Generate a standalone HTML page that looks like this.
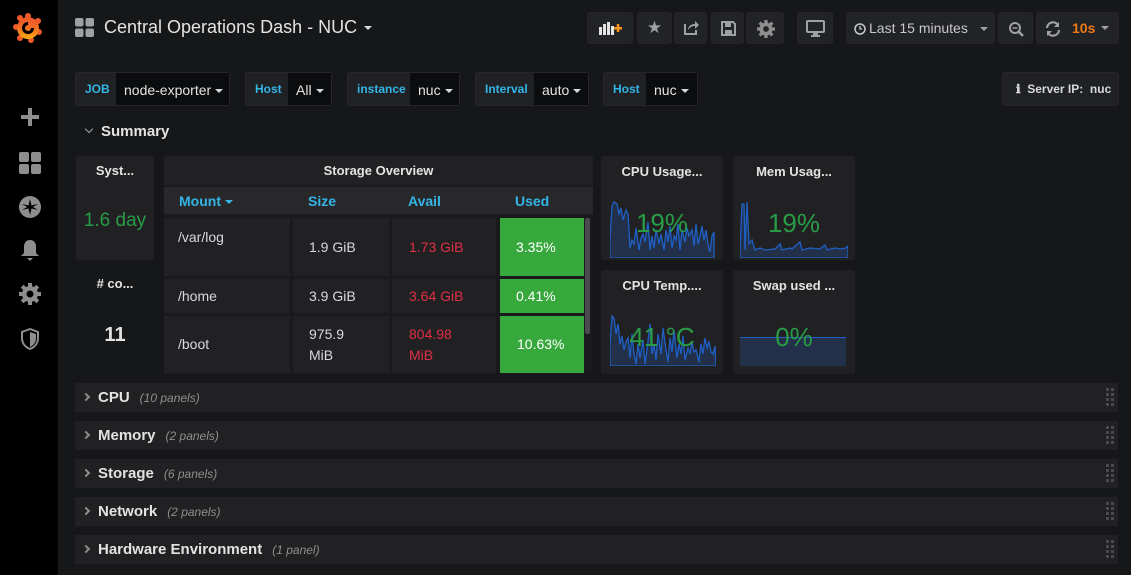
<!DOCTYPE html>
<html><head><meta charset="utf-8"><style>
*{box-sizing:border-box;margin:0;padding:0}
body{width:1131px;height:575px;background:#161719;font-family:"Liberation Sans",Arial,sans-serif;color:#d8d9da;position:relative;overflow:hidden}
.a{position:absolute}
.side{left:0;top:0;width:59px;height:575px;background:#000;border-right:1px solid #1b1b1d}
.btn{position:absolute;top:12px;height:32px;background:#222326;border-radius:3px;border:1px solid #262628}
.var{position:absolute;top:72px;height:34px;background:#202124;border-radius:3px;border:1px solid #27272a}
.lab{position:absolute;top:0;height:32px;line-height:32px;color:#33b5e5;font-size:12px;font-weight:bold;padding-left:9px}
.val{position:absolute;top:0;height:32px;line-height:34px;background:#0b0c0e;font-size:14px;color:#e3e3e3;padding-left:8px}
.caret{display:inline-block;border-left:4px solid transparent;border-right:4px solid transparent;border-top:4px solid #d8d9da;vertical-align:middle;margin-left:4px}
.panel{position:absolute;background:#212124;border-radius:3px}
.ptitle{position:absolute;left:0;right:0;top:8px;text-align:center;font-size:13px;font-weight:bold;color:#e3e3e3}
.big{position:absolute;left:0;right:0;text-align:center;color:#299c46}
.cell{position:absolute;background:#212124;font-size:14px;padding-left:14px}
.red{color:#e02f44}
.grn{background:#37a83c;color:#fff}
.row{position:absolute;left:75px;width:1043px;height:29px;background:#212124;}
.row .t{position:absolute;left:23px;top:6px;font-size:15px;font-weight:bold;color:#e3e3e3}
.row .t i{font-weight:normal;font-size:12px;color:#8e8e8e;margin-left:10px}
.row .chev{position:absolute;left:8px;top:11px;width:6px;height:6px;border-right:2px solid #8e8e8e;border-top:2px solid #8e8e8e;transform:rotate(45deg)}
.drag{position:absolute;right:4px;top:5px;width:8px;height:20px;background:repeating-linear-gradient(90deg,#4a4a4d 0 3px,transparent 3px 5px),transparent;-webkit-mask:repeating-linear-gradient(#000 0 3px,transparent 3px 5px);mask:repeating-linear-gradient(#000 0 3px,transparent 3px 5px)}
.th{position:absolute;top:193px;font-size:14px;font-weight:bold;color:#33b5e5}
</style></head><body>
<div class="a side">
 <svg class="a" style="left:13px;top:13px" width="30" height="30" viewBox="0 0 30 30"><circle cx="15" cy="15" r="11" fill="#f05a28"/><g fill="#f05a28"><circle cx="15" cy="3" r="3"/><circle cx="25" cy="8" r="3"/><circle cx="26" cy="19" r="3"/><circle cx="18" cy="27" r="3"/><circle cx="7" cy="25" r="3"/><circle cx="3" cy="14" r="3"/><circle cx="7" cy="5" r="3"/></g><circle cx="15" cy="15" r="11" fill="url(#g)"/><defs><linearGradient id="g" x1="0" y1="1" x2="0" y2="0"><stop offset="0" stop-color="#fbca0a" stop-opacity=".8"/><stop offset="1" stop-color="#f05a28" stop-opacity="0"/></linearGradient></defs><path d="M15 9a6 6 0 1 0 6 6h-3a3 3 0 1 1-3-3z" fill="#000"/></svg>
 <div class="a" style="left:21px;top:115px;width:18px;height:4px;background:#8e8e8e"></div><div class="a" style="left:28px;top:108px;width:4px;height:18px;background:#8e8e8e"></div>
 <svg class="a" style="left:19px;top:152px" width="22" height="22"><rect x="0" y="0" width="10" height="10" rx="2" fill="#8e8e8e"/><rect x="12" y="0" width="10" height="10" rx="2" fill="#8e8e8e"/><rect x="0" y="12" width="10" height="10" rx="2" fill="#8e8e8e"/><rect x="12" y="12" width="10" height="10" rx="2" fill="#8e8e8e"/></svg>
 <svg class="a" style="left:19px;top:196px" width="22" height="22"><circle cx="11" cy="11" r="11" fill="#8e8e8e"/><path d="M11 3l1.5 6.5 6.5-1.5-5 3 5 3-6.5-1.5-1.5 6.5-1.5-6.5-6.5 1.5 5-3-5-3 6.5 1.5z" fill="#000"/></svg>
 <svg class="a" style="left:20px;top:239px" width="20" height="22"><path d="M10 1c-4 0-6 3-6 7v6l-3 3h18l-3-3V8c0-4-2-7-6-7z" fill="#8e8e8e"/><path d="M7 19h6l-3 3z" fill="#8e8e8e"/></svg>
 <svg class="a" style="left:19px;top:283px" width="22" height="22" viewBox="0 0 22 22"><g fill="#8e8e8e"><circle cx="11" cy="11" r="8"/><rect x="9" y="0" width="4" height="22"/><rect x="0" y="9" width="22" height="4"/><rect x="9" y="0" width="4" height="22" transform="rotate(45 11 11)"/><rect x="9" y="0" width="4" height="22" transform="rotate(-45 11 11)"/></g><circle cx="11" cy="11" r="3.5" fill="#000"/></svg>
 <svg class="a" style="left:20px;top:328px" width="20" height="22"><path d="M10 1L2 4v6c0 5 3 9 8 11 5-2 8-6 8-11V4z" fill="none" stroke="#8e8e8e" stroke-width="2"/><path d="M10 4l6 2v4c0 4-2 7-6 9z" fill="#8e8e8e"/></svg>
</div>

<svg class="a" style="left:75px;top:18px" width="19" height="19"><rect x="0" y="0" width="8.5" height="8.5" rx="2" fill="#9fa0a3"/><rect x="10.5" y="0" width="8.5" height="8.5" rx="2" fill="#9fa0a3"/><rect x="0" y="10.5" width="8.5" height="8.5" rx="2" fill="#9fa0a3"/><rect x="10.5" y="10.5" width="8.5" height="8.5" rx="2" fill="#9fa0a3"/></svg>
<div class="a" style="left:104px;top:17px;font-size:18px;color:#e3e3e3">Central Operations Dash - NUC <span class="caret" style="border-top-color:#d8d9da;margin-left:2px"></span></div>

<div class="btn" style="left:587px;width:46px"><svg class="a" style="left:11px;top:8px" width="24" height="14"><rect x="0" y="6" width="3" height="8" fill="#e3e3e3"/><rect x="4" y="3" width="3" height="11" fill="#e3e3e3"/><rect x="8" y="1" width="3" height="13" fill="#e3e3e3"/><rect x="12" y="5" width="3" height="9" fill="#e3e3e3"/><rect x="15" y="6" width="8" height="2.5" fill="#f7941e"/><rect x="17.8" y="3" width="2.5" height="8" fill="#f7941e"/></svg></div>
<div class="btn" style="left:637px;width:35px;color:#9fa0a3;font-size:17px;text-align:center;line-height:30px">★</div>
<div class="btn" style="left:674px;width:33px"><svg class="a" style="left:8px;top:7px" width="16" height="16"><path d="M2 4v10h11v-4" fill="none" stroke="#9fa0a3" stroke-width="2"/><path d="M5 10c0-4 3-6 7-6V1l4 4-4 4V6c-3 0-5 1-7 4z" fill="#9fa0a3"/></svg></div>
<div class="btn" style="left:711px;width:33px"><svg class="a" style="left:9px;top:8px" width="15" height="15"><path d="M1 1h11l2 2v11H1z" fill="none" stroke="#9fa0a3" stroke-width="2"/><rect x="4" y="2" width="6" height="4" fill="#9fa0a3"/><rect x="4" y="9" width="7" height="4" fill="#9fa0a3"/></svg></div>
<div class="btn" style="left:746px;width:38px"><svg class="a" style="left:10px;top:7px" width="18" height="18" viewBox="0 0 22 22"><g fill="#8e8e8e"><circle cx="11" cy="11" r="8"/><rect x="9" y="0" width="4" height="22"/><rect x="0" y="9" width="22" height="4"/><rect x="9" y="0" width="4" height="22" transform="rotate(45 11 11)"/><rect x="9" y="0" width="4" height="22" transform="rotate(-45 11 11)"/></g><circle cx="11" cy="11" r="3.5" fill="#222326"/></svg></div>
<div class="btn" style="left:797px;width:36px"><svg class="a" style="left:8px;top:7px" width="19" height="17"><rect x="1" y="1" width="17" height="11" rx="1" fill="none" stroke="#9fa0a3" stroke-width="2"/><rect x="7" y="13" width="5" height="2" fill="#9fa0a3"/><rect x="5" y="15" width="9" height="2" fill="#9fa0a3"/></svg></div>
<div class="btn" style="left:846px;width:149px;font-size:14px;color:#c7c8ca;line-height:30px;padding-left:7px"><svg width="12" height="12" style="vertical-align:-2px;margin-right:3px"><circle cx="6" cy="6" r="5" fill="none" stroke="#c7c8ca" stroke-width="1.5"/><path d="M6 3v3H8" fill="none" stroke="#c7c8ca" stroke-width="1.3"/></svg>Last 15 minutes <span class="caret" style="margin-left:8px;border-top-color:#9fa0a3"></span></div>
<div class="btn" style="left:998px;width:35px"><svg class="a" style="left:9px;top:8px" width="16" height="16"><circle cx="7" cy="7" r="5" fill="none" stroke="#9fa0a3" stroke-width="2"/><path d="M11 11l4 4" stroke="#9fa0a3" stroke-width="2.5"/><path d="M4.5 7h5" stroke="#9fa0a3" stroke-width="1.5"/></svg></div>
<div class="btn" style="left:1036px;width:83px"><svg class="a" style="left:8px;top:8px" width="16" height="16"><path d="M2 7a6 6 0 0 1 11-3M14 9a6 6 0 0 1-11 3" fill="none" stroke="#9fa0a3" stroke-width="2.2"/><path d="M14 1v5h-5zM2 15v-5h5z" fill="#9fa0a3"/></svg><span class="a" style="left:35px;top:7px;font-size:14px;font-weight:bold;color:#eb7b18">10s</span><span class="caret a" style="left:60px;top:13px;border-top-color:#9fa0a3"></span></div>

<div class="var" style="left:75px;width:155px"><div class="lab" style="left:0">JOB</div><div class="val" style="left:40px;width:113px">node-exporter<span class="caret"></span></div></div>
<div class="var" style="left:245px;width:87px"><div class="lab">Host</div><div class="val" style="left:42px;width:43px">All<span class="caret"></span></div></div>
<div class="var" style="left:347px;width:113px"><div class="lab">instance</div><div class="val" style="left:62px;width:49px">nuc<span class="caret"></span></div></div>
<div class="var" style="left:475px;width:114px"><div class="lab">Interval</div><div class="val" style="left:58px;width:54px">auto<span class="caret"></span></div></div>
<div class="var" style="left:603px;width:95px"><div class="lab">Host</div><div class="val" style="left:42px;width:51px">nuc<span class="caret"></span></div></div>
<div class="var" style="left:1002px;width:117px;font-size:12px;font-weight:bold;line-height:33px;color:#d8d9da;padding-left:13px">ℹ&nbsp; Server IP:&nbsp; nuc</div>

<div class="a" style="left:86px;top:126px;width:6px;height:6px;border-right:1.5px solid #9fa0a3;border-bottom:1.5px solid #9fa0a3;transform:rotate(45deg)"></div>
<div class="a" style="left:101px;top:123px;font-size:15px;font-weight:bold;color:#e3e3e3">Summary</div>

<div class="panel" style="left:76px;top:156px;width:78px;height:104px"><div class="ptitle" style="top:7px">Syst...</div><div class="big" style="top:54px;font-size:19px">1.6 day</div></div>
<div class="a" style="left:76px;top:262px;width:78px;height:110px"><div class="ptitle" style="top:14px">#&nbsp;co...</div><div class="big" style="top:62px;font-size:20px;color:#e3e3e3;font-weight:bold">11</div></div>

<div class="panel" style="left:164px;top:156px;width:429px;height:218px;background:#1a1a1c"></div>
<div class="a" style="left:164px;top:156px;width:429px;height:29px;background:#212124;text-align:center;font-size:13px;font-weight:bold;line-height:29px;color:#e3e3e3">Storage Overview</div>
<div class="a" style="left:164px;top:187px;width:429px;height:27px;background:#28282b"></div>
<div class="th" style="left:179px">Mount <span class="caret" style="border-top-color:#33b5e5;margin-left:0"></span></div>
<div class="th" style="left:308px">Size</div><div class="th" style="left:408px">Avail</div><div class="th" style="left:515px">Used</div>

<div class="cell" style="left:164px;top:218px;width:126px;height:58px;padding-top:11px">/var/log</div>
<div class="cell" style="left:293px;top:218px;width:96px;height:58px;padding-top:21px;padding-left:16px">1.9 GiB</div>
<div class="cell red" style="left:392px;top:218px;width:104px;height:58px;padding-top:21px;padding-left:17px">1.73 GiB</div>
<div class="cell grn" style="left:500px;top:218px;width:84px;height:58px;padding-top:21px;padding-left:16px">3.35%</div>
<div class="cell" style="left:164px;top:279px;width:126px;height:34px;padding-top:9px">/home</div>
<div class="cell" style="left:293px;top:279px;width:96px;height:34px;padding-top:9px;padding-left:16px">3.9 GiB</div>
<div class="cell red" style="left:392px;top:279px;width:104px;height:34px;padding-top:9px;padding-left:17px">3.64 GiB</div>
<div class="cell grn" style="left:500px;top:279px;width:84px;height:34px;padding-top:9px;padding-left:16px">0.41%</div>
<div class="cell" style="left:164px;top:316px;width:126px;height:57px;padding-top:20px">/boot</div>
<div class="cell" style="left:293px;top:316px;width:96px;height:57px;padding-top:8px;padding-left:16px;line-height:21px">975.9<br>MiB</div>
<div class="cell red" style="left:392px;top:316px;width:104px;height:57px;padding-top:8px;padding-left:17px;line-height:21px">804.98<br>MiB</div>
<div class="cell grn" style="left:500px;top:316px;width:84px;height:57px;padding-top:20px;padding-left:17px">10.63%</div>
<div class="a" style="left:585px;top:218px;width:5px;height:116px;background:#4a4a4d;border-radius:2px"></div>

<div class="panel" style="left:601px;top:156px;width:122px;height:104px"><div class="ptitle">CPU Usage...</div>
<svg class="a" style="left:9px;top:44px" width="106" height="58"><path d="M0 40L2 6 4 2 7 4 9 14 11 8 13 20 16 10 18 14 20 48 22 40 24 44 26 28 29 50 31 38 33 34 35 42 38 22 40 50 42 36 44 48 46 30 49 44 51 34 54 50 56 30 58 42 60 26 62 48 64 36 66 40 68 24 70 50 72 30 75 42 77 28 79 36 82 30 84 46 86 24 88 44 90 36 92 26 94 40 96 30 98 44 100 52 102 36 104 32L104 58 0 58z" fill="#22304a" stroke="#1f60c4" stroke-width="1.3"/></svg>
<div class="big" style="top:52px;font-size:26px">19%</div></div>
<div class="panel" style="left:733px;top:156px;width:122px;height:104px"><div class="ptitle">Mem Usag...</div>
<svg class="a" style="left:7px;top:44px" width="108" height="58"><path d="M0 50L2 4 4 4 5 50 7 2 9 44 12 40 15 50 20 48 25 50 35 49 40 44 42 50 50 48 52 49 60 42 62 50 70 48 80 49 85 45 87 50 95 48 100 49 106 48 108 46L108 58 0 58z" fill="#22304a" stroke="#1f60c4" stroke-width="1.3"/></svg>
<div class="big" style="top:52px;font-size:26px">19%</div></div>
<div class="panel" style="left:601px;top:270px;width:122px;height:104px"><div class="ptitle">CPU Temp....</div>
<svg class="a" style="left:9px;top:44px" width="106" height="52"><path d="M0 30L2 2 4 4 6 20 8 10 10 30 12 22 14 36 16 28 18 24 20 44 22 20 24 40 26 50 28 30 30 44 33 26 35 50 37 36 40 10 42 40 44 30 46 46 48 20 51 40 53 14 56 36 58 48 60 24 62 38 64 16 67 44 69 30 71 40 73 22 75 46 78 34 80 40 82 28 84 38 86 36 89 48 91 30 93 40 95 24 97 34 99 28 101 38 103 40 105 32L106 52 0 52z" fill="#22304a" stroke="#1f60c4" stroke-width="1.3"/></svg>
<div class="big" style="top:52px;font-size:26px">41 °C</div></div>
<div class="panel" style="left:733px;top:270px;width:122px;height:104px"><div class="ptitle">Swap used ...</div>
<div class="a" style="left:7px;top:67px;width:106px;height:29px;background:#22304a;border-top:1px solid #1f60c4"></div>
<div class="big" style="top:52px;font-size:26px">0%</div></div>

<div class="row" style="top:383px"><div class="chev"></div><div class="t">CPU<i>(10 panels)</i></div><div class="drag"></div></div>
<div class="row" style="top:421px"><div class="chev"></div><div class="t">Memory<i>(2 panels)</i></div><div class="drag"></div></div>
<div class="row" style="top:459px"><div class="chev"></div><div class="t">Storage<i>(6 panels)</i></div><div class="drag"></div></div>
<div class="row" style="top:497px"><div class="chev"></div><div class="t">Network<i>(2 panels)</i></div><div class="drag"></div></div>
<div class="row" style="top:535px"><div class="chev"></div><div class="t">Hardware Environment<i>(1 panel)</i></div><div class="drag"></div></div>
</body></html>
